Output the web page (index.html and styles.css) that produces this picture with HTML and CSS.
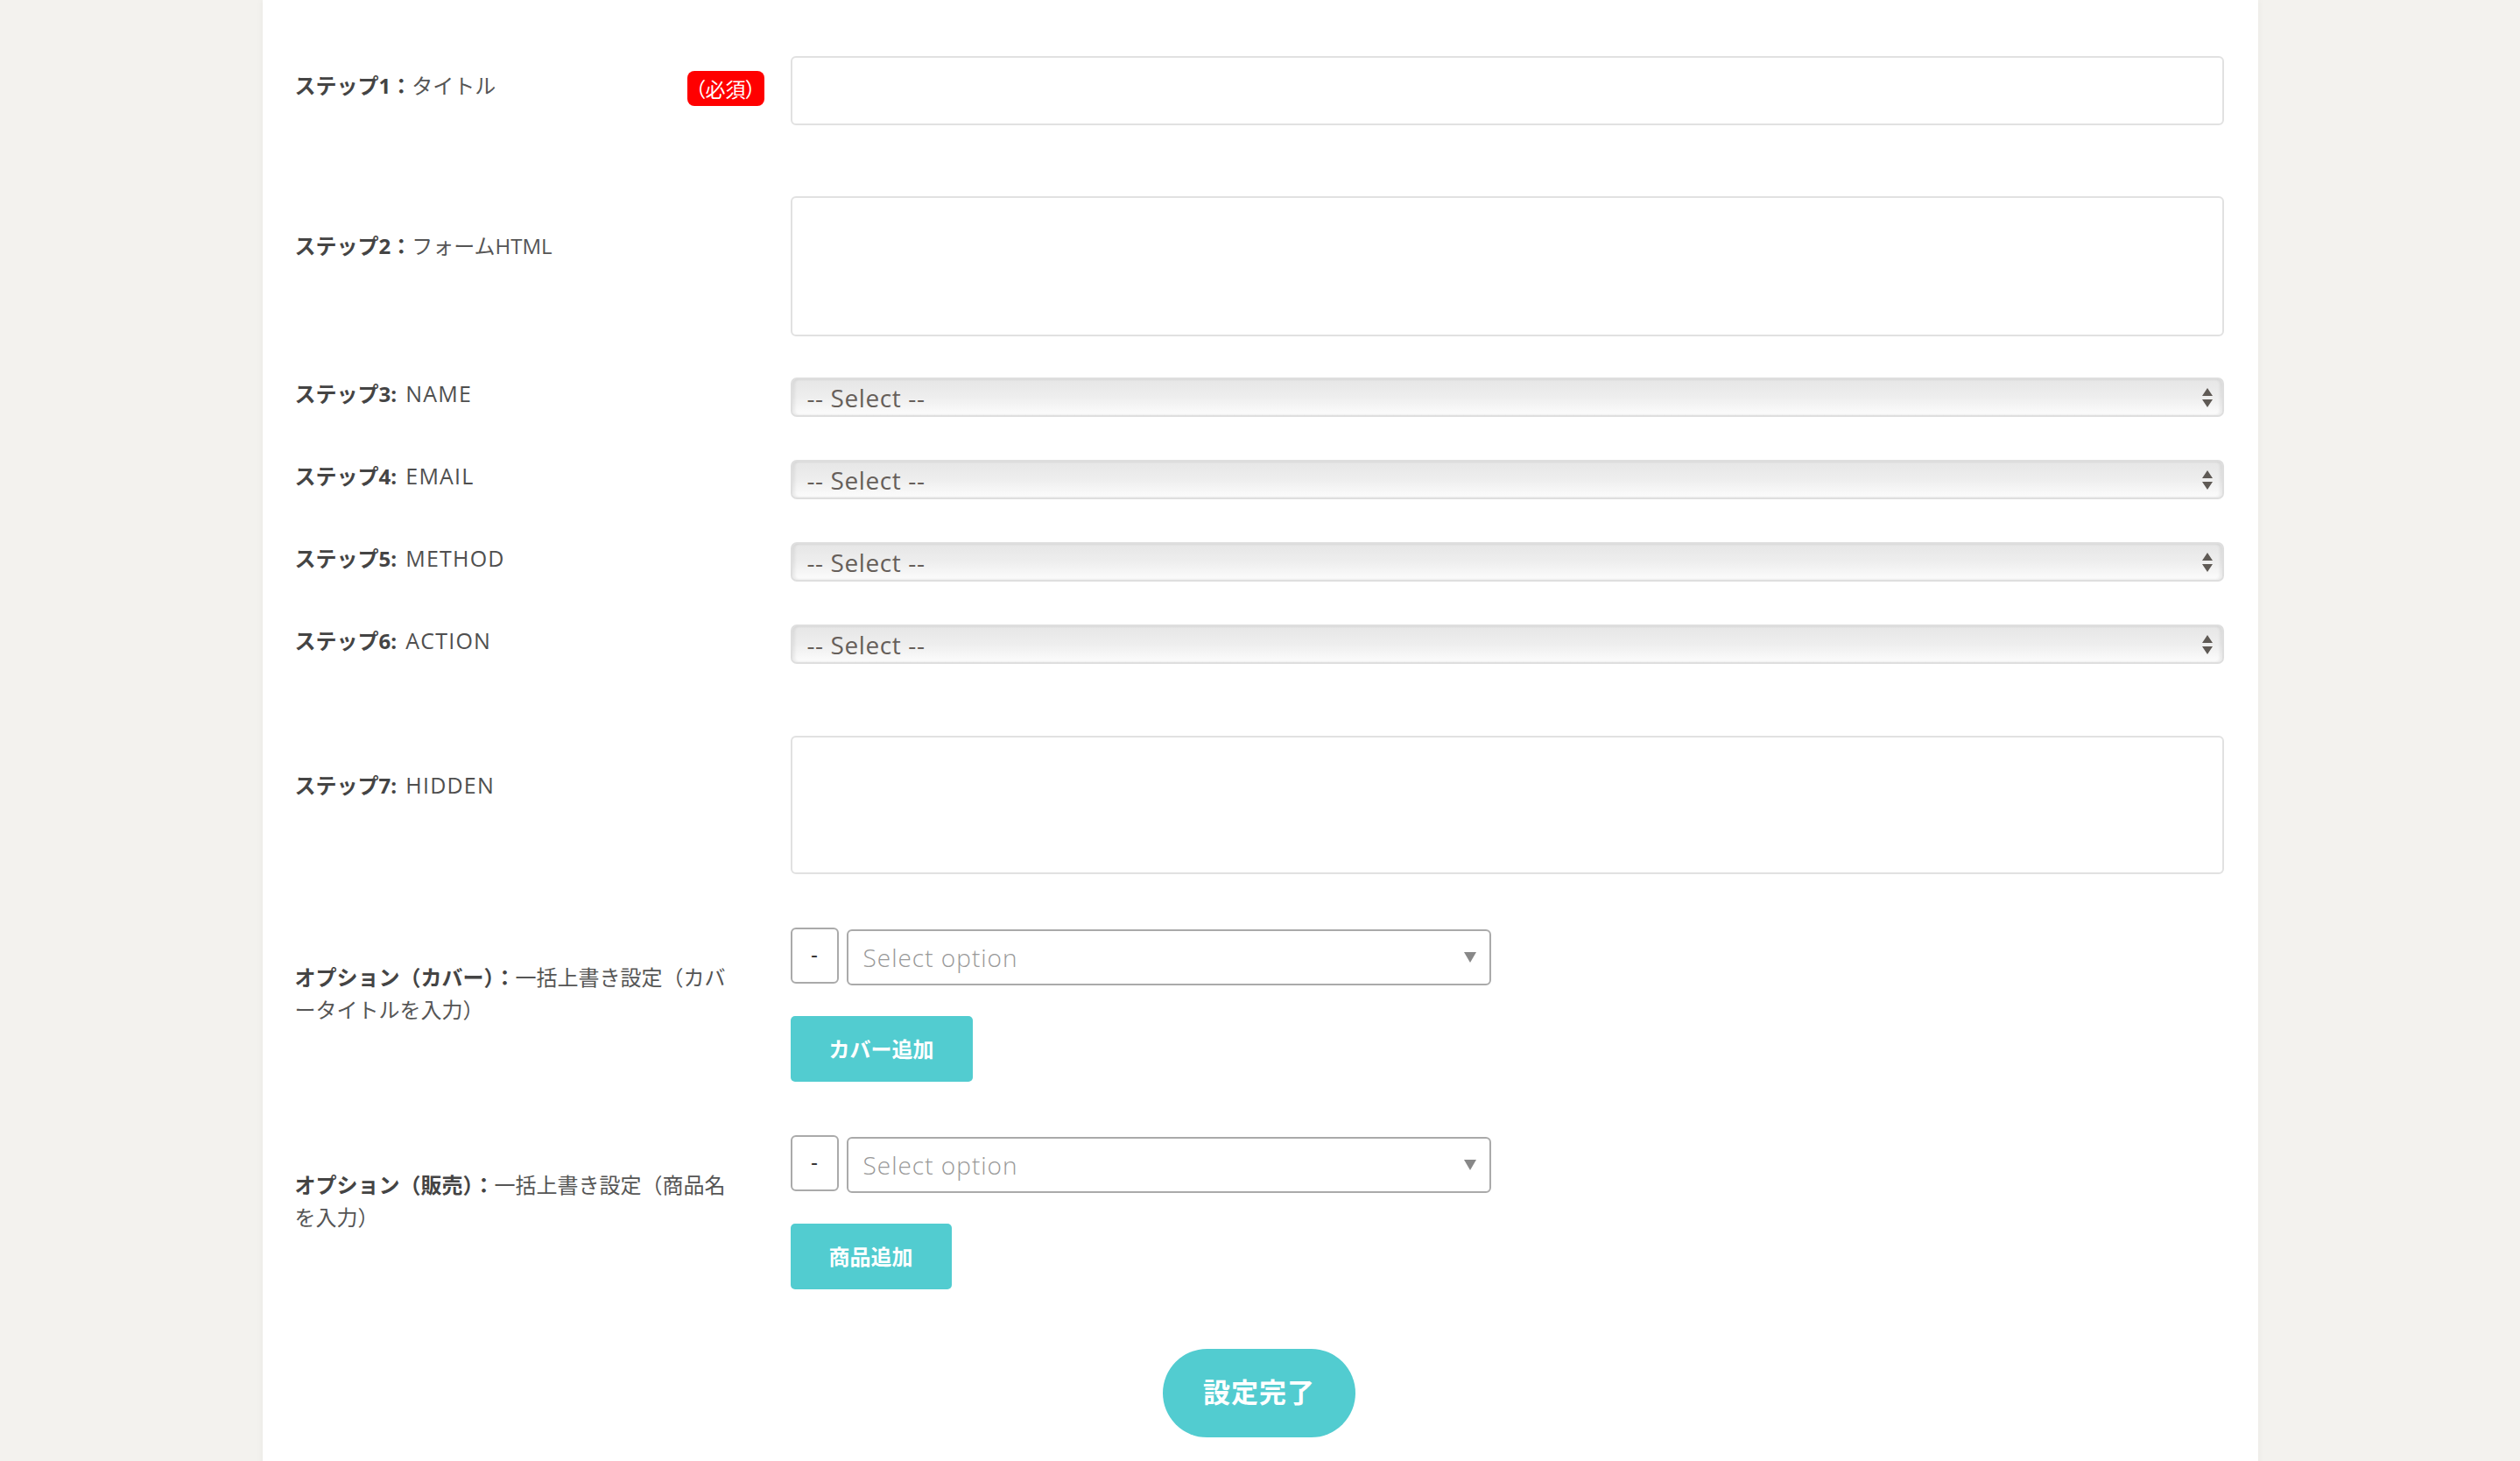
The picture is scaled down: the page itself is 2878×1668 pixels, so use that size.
FILE: index.html
```html
<!DOCTYPE html>
<html lang="ja">
  <head>
    <meta charset="UTF-8" />
    <meta name="viewport" content="width=device-width, initial-scale=1.0" />
    <title>フォーム設定</title>
    <link rel="stylesheet" href="styles.css">
  </head>
  <body>
    <form class="panel">
      <div class="row row-title">
        <div class="label label-input">
          <span class="label-text"><b>ステップ1：</b>タイトル</span>
          <span class="badge">（必須）</span>
        </div>
        <div class="field">
          <input type="text" class="text-input" />
        </div>
      </div>

      <div class="row row-html">
        <div class="label label-area">
          <span class="label-text"><b>ステップ2：</b>フォームHTML</span>
        </div>
        <div class="field">
          <textarea class="text-area"></textarea>
        </div>
      </div>

      <div class="row row-select">
        <div class="label">
          <span class="label-text"><b>ステップ3:</b> <span class="label-value">NAME</span></span>
        </div>
        <div class="field select-wrap">
          <select class="step-select"><option>-- Select --</option></select>
          <svg class="select-arrows" width="12" height="22" viewBox="0 0 12 22"><path d="M0 9 6 0 12 9Z M0 13 12 13 6 22Z" /></svg>
        </div>
      </div>

      <div class="row row-select">
        <div class="label">
          <span class="label-text"><b>ステップ4:</b> <span class="label-value">EMAIL</span></span>
        </div>
        <div class="field select-wrap">
          <select class="step-select"><option>-- Select --</option></select>
          <svg class="select-arrows" width="12" height="22" viewBox="0 0 12 22"><path d="M0 9 6 0 12 9Z M0 13 12 13 6 22Z" /></svg>
        </div>
      </div>

      <div class="row row-select">
        <div class="label">
          <span class="label-text"><b>ステップ5:</b> <span class="label-value">METHOD</span></span>
        </div>
        <div class="field select-wrap">
          <select class="step-select"><option>-- Select --</option></select>
          <svg class="select-arrows" width="12" height="22" viewBox="0 0 12 22"><path d="M0 9 6 0 12 9Z M0 13 12 13 6 22Z" /></svg>
        </div>
      </div>

      <div class="row row-select row-last-select">
        <div class="label">
          <span class="label-text"><b>ステップ6:</b> <span class="label-value">ACTION</span></span>
        </div>
        <div class="field select-wrap">
          <select class="step-select"><option>-- Select --</option></select>
          <svg class="select-arrows" width="12" height="22" viewBox="0 0 12 22"><path d="M0 9 6 0 12 9Z M0 13 12 13 6 22Z" /></svg>
        </div>
      </div>

      <div class="row row-hidden">
        <div class="label label-area">
          <span class="label-text"><b>ステップ7:</b> <span class="label-value">HIDDEN</span></span>
        </div>
        <div class="field">
          <textarea class="text-area text-area-hidden"></textarea>
        </div>
      </div>

      <div class="row row-option">
        <div class="label label-area">
          <span class="label-text"><b>オプション（カバー）：</b>一括上書き設定（カバータイトルを入力）</span>
        </div>
        <div class="field">
          <div class="option-line">
            <button type="button" class="minus-btn">-</button>
            <div class="option-wrap">
              <select class="option-select"><option>Select option</option></select>
              <svg class="option-arrow" width="14" height="12" viewBox="0 0 14 12"><path d="M0 0H14L7 12Z" /></svg>
            </div>
          </div>
          <button type="button" class="add-btn">カバー追加</button>
        </div>
      </div>

      <div class="row row-option">
        <div class="label label-area">
          <span class="label-text"><b>オプション（販売）：</b>一括上書き設定（商品名を入力）</span>
        </div>
        <div class="field">
          <div class="option-line">
            <button type="button" class="minus-btn">-</button>
            <div class="option-wrap">
              <select class="option-select"><option>Select option</option></select>
              <svg class="option-arrow" width="14" height="12" viewBox="0 0 14 12"><path d="M0 0H14L7 12Z" /></svg>
            </div>
          </div>
          <button type="button" class="add-btn">商品追加</button>
        </div>
      </div>

      <div class="submit-line">
        <button type="submit" class="submit-btn">設定完了</button>
      </div>
    </form>
  </body>
</html>
```

FILE: styles.css
```css
/* Page */
body {
  margin: 0;
  background-color: #f3f2ee;
  font-family: "Open Sans", "Noto Sans CJK JP", sans-serif;
  color: #555;
}

.panel {
  width: 2279px;
  min-height: 100vh;
  box-sizing: border-box;
  margin: 0 auto;
  padding: 64px 39px 40px 37px;
  background-color: #fff;
  box-shadow: 0 0 8px rgba(0, 0, 0, 0.05);
}

/* Rows */
.row {
  display: flex;
  align-items: flex-start;
}

.row-title {
  margin-bottom: 81px;
}

.row-html {
  margin-bottom: 47px;
}

.row-select {
  margin-bottom: 49px;
}

.row-last-select {
  margin-bottom: 82px;
}

.row-hidden,
.row-option {
  margin-bottom: 61px;
}

.label {
  width: 536px;
  flex-shrink: 0;
  box-sizing: border-box;
  margin-right: 30px;
  padding-right: 28px;
  display: flex;
  justify-content: space-between;
  align-items: flex-start;
  font-size: 24px;
  line-height: 37px;
  color: #555;
}

.label b {
  color: #444;
  font-weight: bold;
}

.label-value {
  margin-left: 4px;
  font-size: 25px;
  letter-spacing: 1.2px;
  color: #4f4f4f;
}

.label-input {
  padding-top: 15px;
  padding-right: 0;
}

.label-area {
  padding-top: 38px;
}

.badge {
  margin-top: 2px;
  width: 88px;
  height: 40px;
  line-height: 40px;
  text-align: center;
  border-radius: 8px;
  background-color: #ff0000;
  color: #fff;
  font-family: "Noto Sans CJK JP", sans-serif;
  font-size: 23px;
  font-feature-settings: "palt";
}

.field {
  flex: 1;
}

/* Inputs */
.text-input,
.text-area {
  display: block;
  width: 100%;
  box-sizing: border-box;
  border: 2px solid #e1e1e1;
  border-radius: 6px;
  background: #fff;
  font-size: 24px;
}

.text-input {
  height: 79px;
}

.text-area {
  height: 160px;
  resize: none;
}

.text-area-hidden {
  height: 158px;
}

/* Step selects */
.select-wrap {
  position: relative;
}

.step-select {
  display: block;
  width: 100%;
  height: 45px;
  padding: 0 17px;
  appearance: none;
  border: 2px solid #dedede;
  border-radius: 7px;
  background: linear-gradient(#e6e6e6, #eeeeee 50%, #fcfcfc);
  box-shadow: inset 3px 0 3px rgba(0, 0, 0, 0.06), inset -3px 0 3px rgba(0, 0, 0, 0.06);
  font-family: "Open Sans", sans-serif;
  font-size: 28px;
  letter-spacing: 0.6px;
  color: #665f5a;
}

.select-arrows {
  position: absolute;
  right: 13px;
  top: 12px;
  fill: #5f5a55;
  pointer-events: none;
}

/* Option rows */
.option-line {
  display: flex;
  width: 800px;
  gap: 9px;
  margin-bottom: 35px;
}

.minus-btn {
  width: 55px;
  height: 64px;
  flex-shrink: 0;
  border: 2px solid #aaa;
  border-radius: 6px;
  background: #fff;
  color: #333;
  font-size: 24px;
  padding: 0 0 2px;
}

.option-wrap {
  position: relative;
  flex: 1;
}

.option-select {
  display: block;
  width: 100%;
  height: 64px;
  margin-top: 2px;
  padding: 0 17px;
  appearance: none;
  border: 2px solid #aaa;
  border-radius: 6px;
  background: #fff;
  font-family: "Open Sans", sans-serif;
  font-size: 28px;
  font-weight: 300;
  letter-spacing: 1px;
  color: #999;
}

.option-arrow {
  position: absolute;
  right: 17px;
  top: 28px;
  fill: #888;
  pointer-events: none;
}

.add-btn {
  height: 75px;
  padding: 0 44px 3px;
  border: none;
  border-radius: 5px;
  background-color: #52ccd0;
  color: #fff;
  font-family: "Noto Sans CJK JP", sans-serif;
  font-size: 24px;
  font-weight: bold;
}

/* Submit */
.submit-line {
  display: flex;
  justify-content: center;
  margin-top: 68px;
}

.submit-btn {
  width: 220px;
  height: 101px;
  padding: 0 0 6px;
  border: none;
  border-radius: 51px;
  background-color: #52ccd0;
  color: #fff;
  font-family: "Noto Sans CJK JP", sans-serif;
  font-size: 31px;
  font-weight: bold;
  letter-spacing: 1px;
}
```
